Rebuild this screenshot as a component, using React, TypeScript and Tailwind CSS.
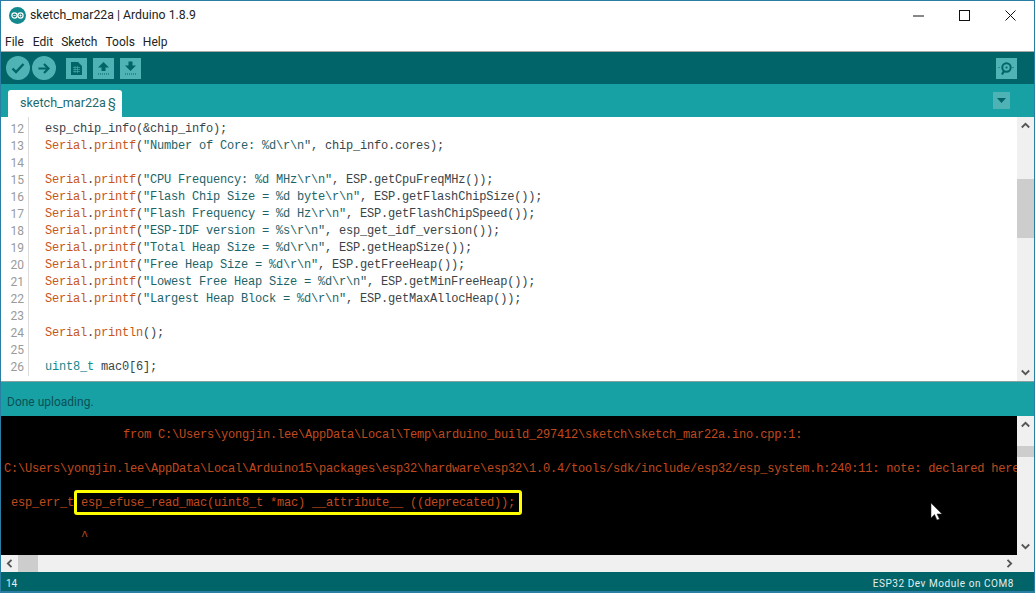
import React from "react";

const ORANGE = "text-[#c8561a]";
const STR = "text-[#1d6468]";
const DARK = "text-[#3a4448]";

function Printf({ s, rest, fn = "printf" }: { s?: string; rest: string; fn?: string }) {
  return (
    <>
      <span className={ORANGE}>Serial</span>
      <span className={DARK}>.</span>
      <span className={ORANGE}>{fn}</span>
      <span className={DARK}>(</span>
      {s ? <span className={STR}>{s}</span> : null}
      <span className={DARK}>{rest}</span>
    </>
  );
}

const lines: [number, React.ReactNode][] = [
  [11, <span className={DARK}>esp_chip_info_t chip_info;</span>],
  [12, <span className={DARK}>esp_chip_info(&amp;chip_info);</span>],
  [13, <Printf s={'"Number of Core: %d\\r\\n"'} rest=", chip_info.cores);" />],
  [14, ""],
  [15, <Printf s={'"CPU Frequency: %d MHz\\r\\n"'} rest=", ESP.getCpuFreqMHz());" />],
  [16, <Printf s={'"Flash Chip Size = %d byte\\r\\n"'} rest=", ESP.getFlashChipSize());" />],
  [17, <Printf s={'"Flash Frequency = %d Hz\\r\\n"'} rest=", ESP.getFlashChipSpeed());" />],
  [18, <Printf s={'"ESP-IDF version = %s\\r\\n"'} rest=", esp_get_idf_version());" />],
  [19, <Printf s={'"Total Heap Size = %d\\r\\n"'} rest=", ESP.getHeapSize());" />],
  [20, <Printf s={'"Free Heap Size = %d\\r\\n"'} rest=", ESP.getFreeHeap());" />],
  [21, <Printf s={'"Lowest Free Heap Size = %d\\r\\n"'} rest=", ESP.getMinFreeHeap());" />],
  [22, <Printf s={'"Largest Heap Block = %d\\r\\n"'} rest=", ESP.getMaxAllocHeap());" />],
  [23, ""],
  [24, <Printf fn="println" rest=");" />],
  [25, ""],
  [26, <><span className="text-[#14898d]">uint8_t</span><span className={DARK}> mac0[6];</span></>],
];

const MONO = "font-['Liberation_Mono',monospace] text-[12px] tracking-[-0.2px] leading-[17px] whitespace-pre";

function Chevron({ d }: { d: string }) {
  return (
    <svg width="9" height="7" viewBox="0 0 9 7" fill="none" stroke="#555" strokeWidth="1.8">
      <path d={d} />
    </svg>
  );
}

function VScroll({ thumbTop, thumbH, bg = "bg-[#f0f0f0]" }: { thumbTop: string; thumbH: string; bg?: string }) {
  return (
    <div className={`w-[17px] shrink-0 flex flex-col items-center ${bg}`}>
      <div className="h-[17px] flex items-center justify-center"><Chevron d="M0.8 5.5 L4.5 1.8 L8.2 5.5" /></div>
      <div className="flex-1 w-full">
        <div className={`${thumbTop} ${thumbH} w-full bg-[#cdcdcd]`} />
      </div>
      <div className="h-[17px] flex items-center justify-center"><Chevron d="M0.8 1.5 L4.5 5.2 L8.2 1.5" /></div>
    </div>
  );
}

function ToolCircle({ children }: { children: React.ReactNode }) {
  return (
    <div className="w-[24px] h-[24px] rounded-full bg-[#4fb2b4] flex items-center justify-center">{children}</div>
  );
}

function ToolSquare({ children }: { children: React.ReactNode }) {
  return <div className="w-[21px] h-[21px] bg-[#4fb2b4] flex items-center justify-center">{children}</div>;
}

export default function App() {
  return (
    <div className="w-[1035px] h-[593px] overflow-hidden flex flex-col bg-white border border-[#2b7ea3] border-b-2 font-['Roboto',sans-serif]">
      {/* title bar */}
      <div className="h-[29px] shrink-0 flex items-center bg-white text-black relative">
        <svg className="ml-[8px]" width="17" height="17" viewBox="0 0 17 17">
          <circle cx="8.5" cy="8.5" r="8.5" fill="#14898d" />
          <circle cx="5.5" cy="8.5" r="2.6" fill="none" stroke="#fff" strokeWidth="1.2" />
          <circle cx="11.5" cy="8.5" r="2.6" fill="none" stroke="#fff" strokeWidth="1.2" />
          <path d="M4.4 8.5h2.2M10.4 8.5h2.2M11.5 7.4v2.2" stroke="#fff" strokeWidth="0.8" />
        </svg>
        <span className="ml-[4px] text-[12.3px] text-[#222] leading-none whitespace-nowrap">sketch_mar22a | Arduino 1.8.9</span>
        <div className="ml-auto flex items-center">
          <svg className="mr-[35px]" width="11" height="2" viewBox="0 0 11 2"><path d="M0 1h11" stroke="#111" strokeWidth="1" /></svg>
          <svg className="mr-[35px]" width="11" height="11" viewBox="0 0 11 11"><rect x="0.5" y="0.5" width="10" height="10" fill="none" stroke="#111" /></svg>
          <svg className="mr-[18px]" width="11" height="11" viewBox="0 0 11 11"><path d="M0.5 0.5l10 10M10.5 0.5l-10 10" stroke="#111" /></svg>
        </div>
      </div>
      {/* menu */}
      <div className="h-[21px] shrink-0 flex items-center gap-[8px] pl-[4px] pt-[2px] text-[12px] text-[#222] bg-white">
        <span>File</span><span className="ml-[1px]">Edit</span><span>Sketch</span><span>Tools</span><span>Help</span>
      </div>
      <div className="h-px bg-[#a8a8a8] shrink-0" />
      {/* toolbar */}
      <div className="h-[32px] shrink-0 bg-[#006468] flex items-center pl-[5px] pr-[17px]">
        <ToolCircle>
          <svg width="14" height="12" viewBox="0 0 14 12" fill="none" stroke="#006468" strokeWidth="2.4"><path d="M1.5 6.5l3.5 3.5 7.5-8" /></svg>
        </ToolCircle>
        <div className="w-[2px]" />
        <ToolCircle>
          <svg width="12" height="11" viewBox="0 0 12 11" fill="none" stroke="#006468" strokeWidth="2.2"><path d="M0.5 5.5h9M6 1l4.5 4.5L6 10" /></svg>
        </ToolCircle>
        <div className="w-[10px]" />
        <ToolSquare>
          <svg width="11" height="13" viewBox="0 0 11 13">
            <path d="M0 0h7l4 4v9H0z" fill="#006468" />
            <path d="M2 5.5h7M2 7.5h7M2 9.5h7M4 4v7M6.5 4v7" stroke="#4fb2b4" strokeWidth="0.6" />
          </svg>
        </ToolSquare>
        <div className="w-[6px]" />
        <ToolSquare>
          <svg width="13" height="14" viewBox="0 0 13 14">
            <path d="M6.5 1L12 6.5H8.5V10h-4V6.5H1z" fill="#006468" />
            <path d="M1 13h11" stroke="#006468" strokeWidth="1" strokeDasharray="1 1" />
          </svg>
        </ToolSquare>
        <div className="w-[6px]" />
        <ToolSquare>
          <svg width="13" height="14" viewBox="0 0 13 14">
            <path d="M4.5 0.5h4V4.5H12L6.5 10 1 4.5h3.5z" fill="#006468" />
            <path d="M1 13h11" stroke="#006468" strokeWidth="1" strokeDasharray="1 1" />
          </svg>
        </ToolSquare>
        <div className="ml-auto">
          <ToolSquare>
            <svg width="17" height="15" viewBox="0 0 17 15" fill="none" stroke="#006468">
              <circle cx="8.5" cy="6.5" r="4.2" strokeWidth="2" />
              <circle cx="8.5" cy="6.5" r="1.1" fill="#006468" stroke="none" />
              <path d="M6 10l-2 3.5" strokeWidth="2.2" />
              <path d="M0.5 6.5h2M14.5 6.5h2" strokeWidth="1" strokeDasharray="1 1" />
            </svg>
          </ToolSquare>
        </div>
      </div>
      {/* tab bar */}
      <div className="h-[33px] shrink-0 bg-[#17a1a5] flex items-end pl-[7px] pr-[24px] relative">
        <div className="h-[27px] w-[114px] bg-white rounded-t-[3px] flex items-center pl-[12px] text-[12.6px] text-[#1b6a6e] whitespace-nowrap">
          sketch_mar22a<span className="ml-[2px]">§</span>
        </div>
        <div className="ml-auto self-start mt-[8px] w-[17px] h-[17px] bg-[#4fb2b4] flex items-center justify-center">
          <svg width="9" height="5" viewBox="0 0 9 5"><path d="M0 0h9L4.5 5z" fill="#006468" /></svg>
        </div>
      </div>
      {/* editor */}
      <div className="h-[264px] shrink-0 flex bg-white overflow-hidden">
        <div className="flex-1 overflow-hidden">
          <div className="-mt-[13px]">
            {lines.map(([n, c]) => (
              <div key={n} className={`flex ${MONO}`}>
                <div className="w-[23px] shrink-0 pr-[4px] text-right text-[#9a9a9a] border-r border-[#dcdcdc] box-content font-['Roboto',sans-serif] tracking-normal">{n === 11 ? "" : n}</div>
                <div className={n === 11 ? "pl-[16px] -translate-y-[1px]" : "pl-[16px]"}>{c}</div>
              </div>
            ))}
          </div>
        </div>
        <VScroll thumbTop="mt-[45px]" thumbH="h-[59px]" />
      </div>
      {/* status */}
      <div className="h-[35px] shrink-0 bg-[#17a1a5] flex items-center pl-[6px] pt-[5px] text-[12px] text-[#0b5055] border-t border-[#8a9fa2]">
        Done uploading.
      </div>
      {/* console */}
      <div className="h-[139px] shrink-0 flex overflow-hidden">
        <div className="flex-1 bg-black pt-[11px] pl-[3px] overflow-hidden relative text-[#c04a1e]">
          <div className={MONO}>{"                 from C:\\Users\\yongjin.lee\\AppData\\Local\\Temp\\arduino_build_297412\\sketch\\sketch_mar22a.ino.cpp:1:"}</div>
          <div className={MONO}>{" "}</div>
          <div className={MONO}>{"C:\\Users\\yongjin.lee\\AppData\\Local\\Arduino15\\packages\\esp32\\hardware\\esp32\\1.0.4/tools/sdk/include/esp32/esp_system.h:240:11: note: declared here"}</div>
          <div className={MONO}>{" "}</div>
          <div className={MONO}>{" esp_err_t esp_efuse_read_mac(uint8_t *mac) __attribute__ ((deprecated));"}</div>
          <div className={MONO}>{" "}</div>
          <div className={MONO}>{"           ^"}</div>
          <div className="absolute left-[73px] top-[74px] w-[448px] h-[25px] border-[3px] border-[#ffff00] rounded-[3px]" />
          <svg className="absolute left-[929px] top-[86px]" width="13" height="19" viewBox="0 0 13 19">
            <path d="M1 1v15l3.5-3.5L7 18l2.5-1-2.5-5h5z" fill="#fff" stroke="#222" strokeWidth="0.5" />
          </svg>
        </div>
        <VScroll thumbTop="mt-[13px]" thumbH="h-[11px]" />
      </div>
      {/* horizontal scroll */}
      <div className="h-[17px] shrink-0 flex items-center bg-[#f0f0f0]">
        <div className="w-[17px] flex justify-center">
          <svg width="7" height="9" viewBox="0 0 7 9" fill="none" stroke="#555" strokeWidth="1.8"><path d="M5.5 0.8L1.8 4.5l3.7 3.7" /></svg>
        </div>
        <div className="w-[20px] h-full bg-[#cdcdcd]" />
        <div className="ml-auto mr-[21px]">
          <svg width="7" height="9" viewBox="0 0 7 9" fill="none" stroke="#555" strokeWidth="1.8"><path d="M1.5 0.8l3.7 3.7-3.7 3.7" /></svg>
        </div>
      </div>
      {/* footer */}
      <div className="flex-1 bg-[#006468] flex items-center justify-between pl-[5px] pr-[20px] pt-[3px] text-[#e0efef]">
        <span className="text-[10px]">14</span>
        <span className="text-[10px] tracking-[0.55px]">ESP32 Dev Module on COM8</span>
      </div>
    </div>
  );
}
